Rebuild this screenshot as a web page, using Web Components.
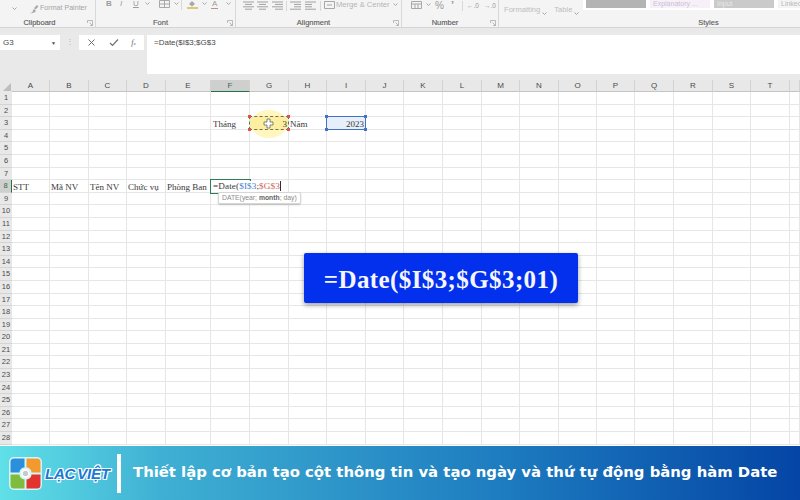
<!DOCTYPE html>
<html lang="vi">
<head>
<meta charset="utf-8">
<title>Hàm Date</title>
<style>
  html, body { margin: 0; padding: 0; width: 800px; height: 500px; overflow: hidden; background: #fff; }
  body { display: flex; flex-direction: column; position: relative; font-family: "Liberation Sans", sans-serif; }
</style>
</head>
<body>
<xl-ribbon></xl-ribbon>
<xl-formula-bar cell="G3" formula="=Date($I$3;$G$3"></xl-formula-bar>
<xl-sheet></xl-sheet>
<xl-callout>=Date($I$3;$G$3;01)</xl-callout>
<lv-footer>Thiết lập cơ bản tạo cột thông tin và tạo ngày và thứ tự động bằng hàm Date</lv-footer>

<script>
const caret = '<svg width="5" height="3" viewBox="0 0 5 3"><path d="M.5.5l2 2 2-2" stroke="#a8a8a8" fill="none"/></svg>';
const lines = (rows) => `<svg width="11" height="9" viewBox="0 0 11 9">${rows.map((r, i) => `<path d="M${r[0]} ${1 + i * 2.4}H${r[1]}" stroke="#a0a0a0"/>`).join('')}</svg>`;
const launcher = '<svg class="launch" width="6" height="6" viewBox="0 0 6 6"><path d="M.5 3V.5H5.500V5.500H3M2.500 2.500l3 3" stroke="#a0a0a0" stroke-width=".7" fill="none"/></svg>';
// w = slot width, so the strip keeps the spacing of the real ribbon
const slot = (w, inner, style = '') => `<span class="slot" style="width:${w}px;${style}">${inner}</span>`;

class XlRibbon extends HTMLElement {
  constructor() {
    super();
    this.attachShadow({ mode: 'open' });
    this.shadowRoot.innerHTML = `
      <style>
        :host { display: block; height: 28px; flex: none; background: #f4f4f4; border-bottom: 1px solid #d4d4d4; box-sizing: border-box; color: #a4a4a4; font-size: 8px; overflow: hidden; }
        .groups { display: grid; grid-template-columns: 96px 140px 166px 97px 1fr; height: 27px; }
        .group { display: flex; flex-direction: column; border-right: 1px solid #d8d8d8; min-width: 0; position: relative; }
        .group:last-child { border-right: none; }
        .tools { height: 18px; flex: none; box-sizing: border-box; display: flex; align-items: flex-start; white-space: nowrap; }
        .slot { display: flex; flex: none; justify-content: flex-start; }
        .sep { width: 1px; height: 10px; background: #d8d8d8; flex: none; }
        .label { text-align: center; color: #5e5e5e; font-size: 7.5px; line-height: 10px; -webkit-text-stroke: .15px #5e5e5e; }
        .launch { position: absolute; right: 2px; bottom: 2px; }
        .styles { position: absolute; left: 84px; top: 0; width: 240px; height: 10px; background: #fff; display: flex; gap: 4px; padding-left: 3px; box-sizing: border-box; overflow: hidden; }
        .styles span { width: 60px; height: 8px; flex: none; font-size: 7px; line-height: 8px; color: #b8b8b8; overflow: hidden; white-space: nowrap; padding-left: 3px; box-sizing: border-box; }
      </style>
      <div class="groups">
        <div class="group">
          <div class="tools" style="padding-top:4px;padding-left:12px">
            ${slot(17, caret, 'padding-top:3px')}
            ${slot(11, '<svg width="10" height="10" viewBox="0 0 10 10"><path d="M1 9c2 0 3-1 3-3l1-1 2 2-1 1c-1 1-3 1.500-5 1zM5 4l3-3 1.500 1.500-3 3z" fill="#a8a8a8"/></svg>')}
            <span style="font-size:7.100px;line-height:9px">Format Painter</span>
          </div>
          <div class="label" style="padding-right:16px">Clipboard</div>${launcher}
        </div>
        <div class="group">
          <div class="tools" style="padding-left:10px;color:#9c9c9c;line-height:8px;font-size:8px">
            ${slot(14, '<b>B</b>')}${slot(13, '<i>I</i>')}${slot(12, '<u>U</u>')}${slot(14, caret, 'padding-top:2px')}
            ${slot(15, '<svg width="11" height="8" viewBox="0 0 11 8"><path d="M.5.5h10v7h-10zM.5 4h10M5.500.5v7" stroke="#a8a8a8" fill="none"/></svg>')}${slot(7, caret, 'padding-top:2px')}
            <span class="sep" style="margin-right:5px"></span>
            ${slot(15, '<svg width="11" height="9" viewBox="0 0 11 9"><path d="M2 4l3-3 3 3-3 2.500z" fill="#a8a8a8"/><path d="M0 8h11" stroke="#d9b74a" stroke-width="1.500"/></svg>')}${slot(9, caret, 'padding-top:2px')}
            ${slot(15, '<span style="border-bottom:1.500px solid #c98a8a;height:8px;padding:0 1px">A</span>')}${slot(6, caret, 'padding-top:2px')}
          </div>
          <div class="label" style="padding-right:10px">Font</div>${launcher}
        </div>
        <div class="group">
          <div class="tools" style="padding-left:7px;padding-top:1px;line-height:8px;color:#b0b0b0">
            ${slot(14, lines([[0, 11], [2, 9], [0, 11], [2, 9]]))}${slot(15, lines([[0, 11], [2, 9], [0, 11], [2, 9]]))}${slot(14, lines([[0, 11], [3, 11], [0, 11], [3, 11]]))}
            <span class="sep" style="margin-right:3px"></span>
            ${slot(15, lines([[0, 11], [4, 11], [4, 11], [0, 11]]))}${slot(15, lines([[0, 11], [0, 7], [0, 7], [0, 11]]))}
            <span class="sep" style="margin-right:3px"></span>
            ${slot(12, '<svg width="11" height="8" viewBox="0 0 11 8"><path d="M.5.5h10v7h-10z" stroke="#a8a8a8" fill="none"/><path d="M3 4h5" stroke="#a8a8a8"/></svg>')}
            <span style="width:57px;font-size:7.600px;line-height:8px;color:#b4b4b4;flex:none">Merge &amp; Center</span>${slot(6, caret, 'padding-top:2px')}
          </div>
          <div class="label" style="padding-right:10px">Alignment</div>${launcher}
        </div>
        <div class="group">
          <div class="tools" style="padding-left:9px;padding-top:1px;color:#999;line-height:9px">
            ${slot(15, '<svg width="11" height="9" viewBox="0 0 11 9"><path d="M.5.5h10v7h-10zM.5 3h10M4 3v4.500M7 3v4.500" stroke="#a8a8a8" fill="none"/></svg>')}${slot(9, caret, 'padding-top:2px')}
            ${slot(16, '<span style="font-size:10px">%</span>')}${slot(11, '<b style="font-size:11px">&rsquo;</b>')}
            <span class="sep" style="margin-right:4px"></span>
            ${slot(17, '<span style="font-size:6.500px">&larr;.0</span>')}${slot(14, '<span style="font-size:6.500px">&rarr;.0</span>')}
          </div>
          <div class="label" style="padding-right:10px">Number</div>${launcher}
        </div>
        <div class="group">
          <div class="tools" style="padding:5px 0 0 5px;gap:2px;color:#bdbdbd;line-height:9px;font-size:7.600px">
            <span>Formatting</span><span style="padding:3px 5px 0 0">${caret}</span><span>Table</span><span style="padding-top:3px">${caret}</span>
          </div>
          <div class="label" style="padding-left:118px">Styles</div>
          <div class="styles">
            <span style="background:#b4b4b4"></span>
            <span style="background:#f7f0f9;color:#cbbfd6">Explanatory ...</span>
            <span style="background:#cacaca;color:#e8e8e8">Input</span>
            <span style="background:#f4f4f4">Linked</span>
          </div>
        </div>
      </div>`;
  }
}

class XlFormulaBar extends HTMLElement {
  static get observedAttributes() { return ['cell', 'formula']; }
  constructor() {
    super();
    this.attachShadow({ mode: 'open' });
  }
  connectedCallback() { this._render(); }
  attributeChangedCallback() { this._render(); }
  _render() {
    this.shadowRoot.innerHTML = `
      <style>
        :host { display: flex; height: 52px; flex: none; background: #e9e9e9; box-sizing: border-box; padding: 7px 0 6px; color: #4a4a4a; font-size: 8px; }
        .name { width: 60px; height: 15px; background: #fff; display: flex; justify-content: space-between; align-items: center; padding: 0 4px 0 3px; box-sizing: border-box; }
        .sep { width: 19px; text-align: center; color: #bbb; line-height: 14px; }
        .btns { width: 65px; height: 15px; background: #fff; display: flex; align-items: center; justify-content: space-around; color: #666; padding: 0 2px; box-sizing: border-box; }
        .input { flex: 1; margin-left: 3px; background: #fff; padding: 3px 7px; line-height: 10px; height: 39px; box-sizing: border-box; }
        svg { display: block; }
      </style>
      <div class="name"><span>${this.getAttribute('cell') || ''}</span><span style="font-size:5px">&#9660;</span></div>
      <div class="sep">&#8942;</div>
      <div class="btns">
        <svg width="9" height="9" viewBox="0 0 9 9"><path d="M1.500 1.500l6 6M7.500 1.500l-6 6" stroke="#707070" stroke-width="1" fill="none"/></svg>
        <svg width="10" height="9" viewBox="0 0 10 9"><path d="M1 5l2.500 2.500L9 1.500" stroke="#707070" stroke-width="1.200" fill="none"/></svg>
        <i style="font-family:'Liberation Serif',serif">f<span style="font-size:5px">x</span></i>
      </div>
      <div class="input">${this.getAttribute('formula') || ''}</div>`;
  }
}

class XlSheet extends HTMLElement {
  constructor() {
    super();
    this.attachShadow({ mode: 'open' });
  }
  connectedCallback() {
    const widths = [38, 39, 38, 39, 45, 39, 39, 38, 39, 38, 39, 39, 38, 39, 38, 38, 39, 39, 38, 39, 10];
    const letters = 'ABCDEFGHIJKLMNOPQRST'.split('');
    const handles = '<i class="h tl"></i><i class="h tr"></i><i class="h bl"></i><i class="h br"></i>';
    let html = '<div class="corner"><svg width="8" height="8" viewBox="0 0 8 8"><path d="M8 0v8H0z" fill="#bdbdbd"/></svg></div>';
    widths.forEach((w, i) => {
      const name = letters[i] || '';
      html += `<div class="ch${name === 'F' ? ' on' : ''}">${name}</div>`;
    });
    const cells = {
      '3-F': ['Tháng', 'txt c'], '3-G': ['3', 'num copy'], '3-H': ['Năm', 'txt'], '3-I': ['2023', 'num ref'],
      '8-A': ['STT', 'txt'], '8-B': ['Mã NV', 'txt'], '8-C': ['Tên NV', 'txt'], '8-D': ['Chức vụ', 'txt'], '8-E': ['Phòng Ban', 'txt'],
    };
    for (let r = 1; r <= 28; r++) {
      html += `<div class="rh${r === 8 ? ' on' : ''}">${r}</div>`;
      widths.forEach((w, i) => {
        const key = `${r}-${letters[i]}`;
        if (r === 8 && letters[i] === 'F') {
          html += `<div class="cell active"><i class="dot"></i><span class="edit">=Date(<span style="color:#4a7fd0">$I$3</span>;<span style="color:#cf5f58">$G$3</span><span class="caret"></span></span><span class="tip">DATE(year; <b>month</b>; day)</span></div>`;
        } else if (cells[key]) {
          const kind = cells[key][1];
          let extra = '';
          if (kind.includes('copy')) extra = `<span class="glow"></span><span class="frame">${handles}</span><svg class="plus" width="11" height="11" viewBox="0 0 11 11"><path d="M4 1h3v3h3v3H7v3H4V7H1V4h3z" fill="#fff" stroke="#666" stroke-width=".8"/></svg>`;
          if (kind.includes('ref')) extra = `<span class="frame">${handles}</span>`;
          html += `<div class="cell ${kind}">${extra}<span class="val">${cells[key][0]}</span></div>`;
        } else {
          html += '<div class="cell"></div>';
        }
      });
    }
    this.shadowRoot.innerHTML = `
      <style>
        :host { display: block; flex: 1; min-height: 0; overflow: hidden; background: #fff; }
        .grid { display: grid; grid-template-columns: 12px ${widths.map(w => w + 'px').join(' ')}; grid-template-rows: 12px repeat(28, 12.6px); width: 812px; }
        .corner { background: #e8e8e8; display: flex; align-items: flex-end; justify-content: flex-end; padding: 0 1px 1px 0; box-sizing: border-box; overflow: hidden; }
        .ch { background: #e8e8e8; border-right: 1px solid #d2d2d2; border-bottom: 1px solid #c4c4c4; box-sizing: border-box; text-align: center; color: #4a4a4a; font-size: 8px; line-height: 12px; }
        .ch.on { background: #cfcfcf; color: #3b6b4e; border-bottom: 1px solid #217346; }
        .rh { background: #e8e8e8; border-bottom: 1px solid #d4d4d4; box-sizing: border-box; text-align: center; color: #4a4a4a; font-size: 7.500px; line-height: 12px; }
        .rh.on { background: #cfcfcf; color: #2f6d4a; border-right: 1px solid #217346; }
        .cell { border-right: 1px solid #e6e6e6; border-bottom: 1px solid #e6e6e6; box-sizing: border-box; position: relative; font: 9px/14.500px "Liberation Serif", serif; color: #3a3a3a; white-space: nowrap; }
        .txt .val { padding-left: 1px; }
        .c .val { padding-left: 2px; }
        .num { text-align: right; padding-right: 1px; }
        .val { position: relative; z-index: 1; }
        .copy { background: #f8eeb0; }
        .glow { position: absolute; left: 1px; top: -7px; width: 36px; height: 28px; border-radius: 50%; background: rgba(255, 240, 150, .6); }
        .frame { position: absolute; left: -1px; top: -1px; right: -1px; bottom: -1px; box-sizing: border-box; z-index: 1; }
        .copy .frame { border: 1.500px dashed #77703c; }
        .plus { position: absolute; left: 13px; top: 1px; z-index: 2; }
        .ref { background: #e6effa; }
        .ref .frame { border: 1.500px solid #4472c4; }
        .h { position: absolute; width: 3px; height: 3px; background: #4472c4; }
        .copy .h { background: #d9534f; }
        .tl { left: -2px; top: -2px; } .tr { right: -2px; top: -2px; } .bl { left: -2px; bottom: -2px; } .br { right: -2px; bottom: -2px; }
        .active { outline: 1.500px solid #2f7d55; outline-offset: -.5px; z-index: 3; }
        .dot { position: absolute; right: -2px; bottom: -2px; width: 3px; height: 3px; background: #217346; }
        .edit { position: absolute; left: 1px; top: 1px; background: #fff; padding-left: 1px; font-size: 9.200px; line-height: 11px; letter-spacing: .1px; z-index: 1; }
        .caret { display: inline-block; width: 1px; height: 10px; background: #333; vertical-align: -2px; }
        .tip { position: absolute; left: 7px; top: 12px; height: 12px; padding: 0 3px; background: #fff; border: 1px solid #d6d6d6; border-radius: 2px; box-shadow: 0 1px 2px rgba(0,0,0,.2); font: 6.800px/10px "Liberation Sans", sans-serif; color: #8a8a8a; box-sizing: border-box; z-index: 2; }
        .tip b { color: #666; }
      </style>
      <div class="grid">${html}</div>`;
  }
}

class XlCallout extends HTMLElement {
  constructor() {
    super();
    this.attachShadow({ mode: 'open' });
    this.shadowRoot.innerHTML = `
      <style>
        :host { position: absolute; left: 304px; top: 253px; width: 274px; height: 50px; box-sizing: border-box; padding-top: 4px; background: #0330ec; border-radius: 2px; box-shadow: 0 2px 5px rgba(0,0,0,.4); display: flex; align-items: center; justify-content: center; color: #f4f6ff; font: bold 25px "Liberation Serif", serif; letter-spacing: .4px; white-space: nowrap; }
      </style>
      <slot></slot>`;
  }
}

class LvFooter extends HTMLElement {
  constructor() {
    super();
    this.attachShadow({ mode: 'open' });
    this.shadowRoot.innerHTML = `
      <style>
        :host { display: flex; flex: none; height: 54px; box-sizing: border-box; align-items: center; padding-left: 9px; background: linear-gradient(90deg, #60e0e8 0%, #3fb0d3 20%, #1e7dc0 62%, #0445a5 100%); color: #fff; }
        .logo { display: flex; align-items: center; gap: 3px; width: 104px; flex: none; }
        .brand { font: italic bold 15px "Liberation Sans", sans-serif; color: #1a78d6; letter-spacing: -.2px; word-spacing: -2px; white-space: nowrap; text-shadow: 1px 0 0 #fff, -1px 0 0 #fff, 0 1px 0 #fff, 0 -1px 0 #fff, 1px 1px 0 #fff, -1px -1px 0 #fff, 1px -1px 0 #fff, -1px 1px 0 #fff; }
        .rule { width: 4px; height: 39px; background: #fff; margin: 0 12px 0 4px; flex: none; }
        .title { font: bold 14.850px "DejaVu Sans", sans-serif; white-space: nowrap; padding-bottom: 2px; }
      </style>
      <div class="logo">
        <svg width="33" height="33" viewBox="0 0 33 33">
          <rect x="0" y="0" width="33" height="33" rx="5" fill="#fff" opacity=".75"/>
          <path d="M5 1.500h10.500v9a5 5 0 0 0-5 5h-9V5a3.500 3.500 0 0 1 3.500-3.500z" fill="#2b8fdc"/>
          <path d="M17.500 1.500H28A3.500 3.500 0 0 1 31.500 5v10.500h-9a5 5 0 0 0-5-5z" fill="#f39a2e"/>
          <path d="M1.500 17.500h9a5 5 0 0 0 5 5v9H5A3.500 3.500 0 0 1 1.500 28z" fill="#7fbb3d"/>
          <path d="M22.500 17.500h9V28a3.500 3.500 0 0 1-3.500 3.500H17.500v-9a5 5 0 0 0 5-5z" fill="#e2332f"/>
          <circle cx="16.500" cy="16.500" r="3.500" fill="#c9c9c9" stroke="#fff" stroke-width="1.500"/>
        </svg>
        <span class="brand">LẠC VIỆT</span>
      </div>
      <div class="rule"></div>
      <div class="title"><slot></slot></div>`;
  }
}

customElements.define('xl-ribbon', XlRibbon);
customElements.define('xl-formula-bar', XlFormulaBar);
customElements.define('xl-sheet', XlSheet);
customElements.define('xl-callout', XlCallout);
customElements.define('lv-footer', LvFooter);
</script>
</body>
</html>
